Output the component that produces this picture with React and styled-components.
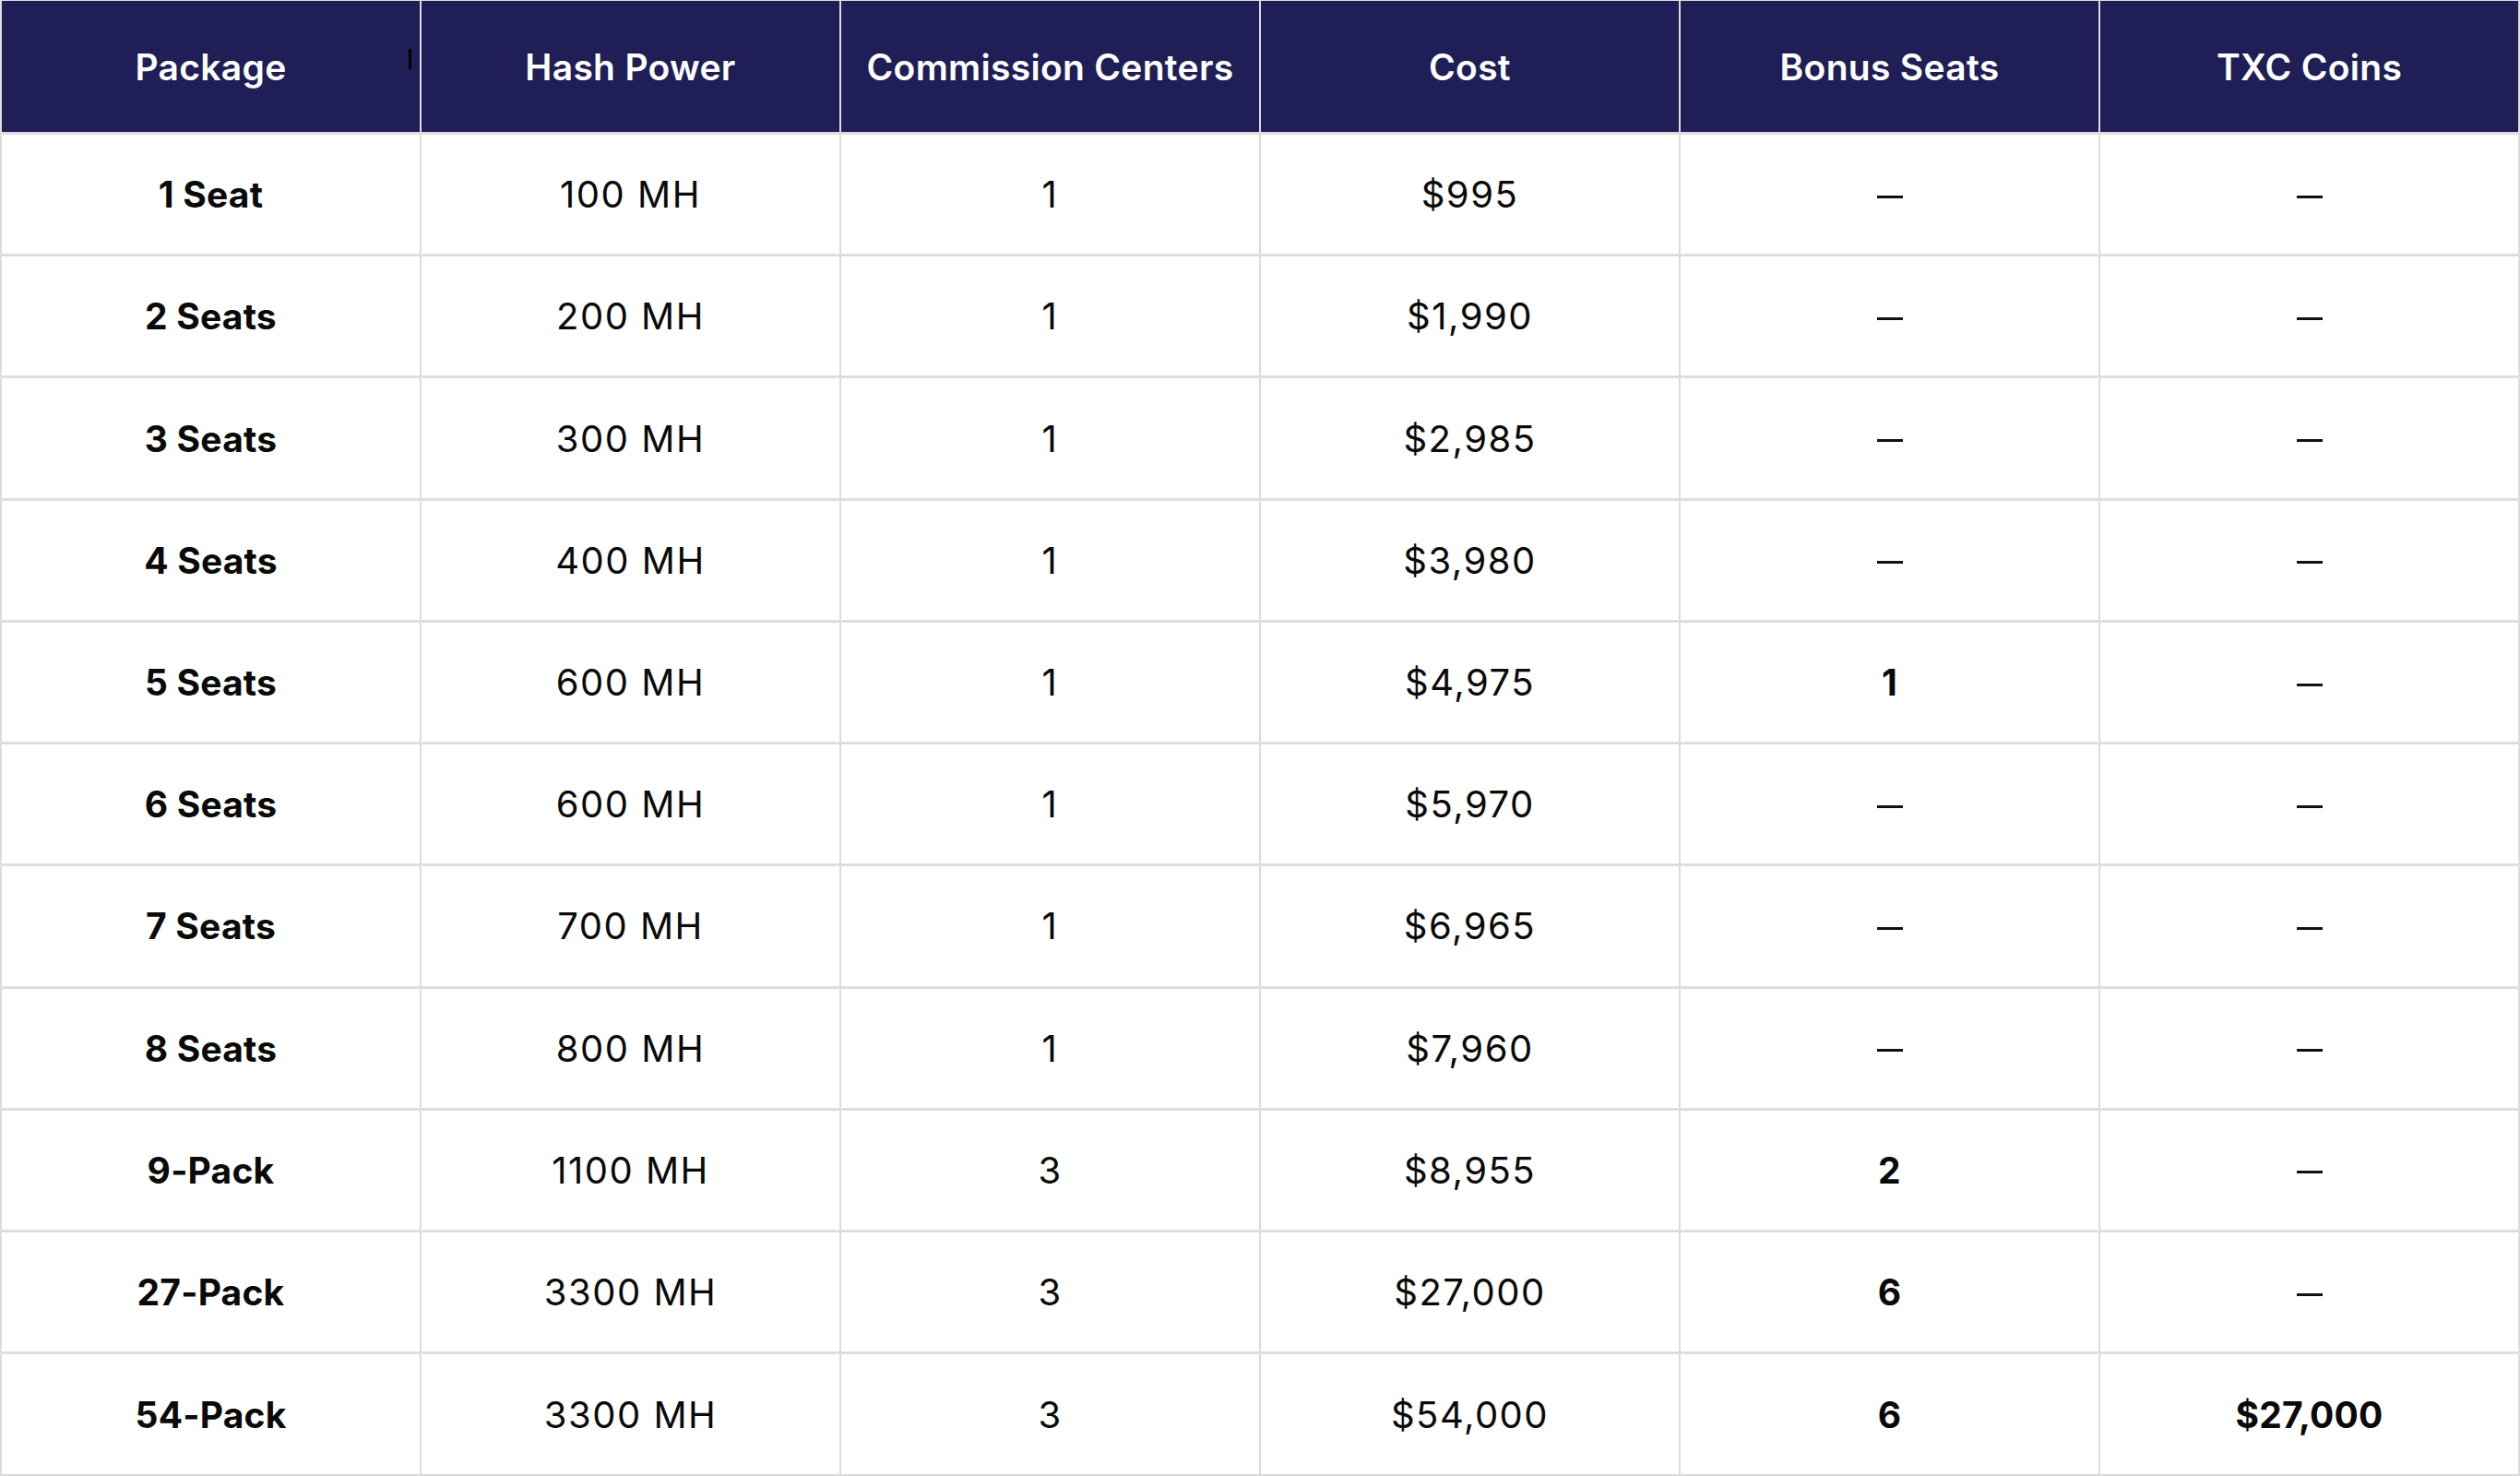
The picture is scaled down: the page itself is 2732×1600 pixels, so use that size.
import React from "react";
import styled, { createGlobalStyle } from "styled-components";

const GlobalStyle = createGlobalStyle`
  html, body {
    margin: 0;
    padding: 0;
    background: #ffffff;
  }
  body {
    font-family: Inter, "Open Sans", "Liberation Sans", sans-serif;
  }
`;

const Page = styled.div`
  width: 100vw;
  height: 100vh;
  overflow: hidden;
`;

const Table = styled.table`
  width: 100%;
  height: 100%;
  table-layout: fixed;
  border-collapse: collapse;
  border: 2px solid #dcdcdc;
  border-top-width: 1px;
`;

const HeadRow = styled.tr`
  height: 144px;
  background: #1f1e57;
`;

const HeadCell = styled.th`
  position: relative;
  color: #ffffff;
  font-size: 39px;
  font-weight: 600;
  letter-spacing: 0.3px;
  text-align: center;
  vertical-align: middle;
  border: 2px solid #dcdcdc;
  border-top-width: 1px;
  border-bottom-color: #c9c9cf;
`;

const Cursor = styled.span`
  position: absolute;
  left: 441px;
  top: 52px;
  width: 3px;
  height: 22px;
  background: #000000;
`;

const Row = styled.tr`
  height: 132px;
`;

const Cell = styled.td`
  color: #0a0a0a;
  font-size: ${(p) => (p.$bold ? "39px" : "40px")};
  font-weight: ${(p) => (p.$bold ? 700 : 400)};
  letter-spacing: ${(p) => (p.$bold ? "0.2px" : "1.5px")};
  text-align: center;
  vertical-align: middle;
  border-left: 2px solid #dcdcdc;
  border-right: 2px solid #dcdcdc;
  border-top: 3px solid #dedede;
`;

const Dash = styled.span`
  display: inline-block;
  width: 28px;
  height: 3px;
  background: #111111;
  vertical-align: middle;
  margin-top: -2px;
`;

const columns = [
  "Package",
  "Hash Power",
  "Commission Centers",
  "Cost",
  "Bonus Seats",
  "TXC Coins",
];

const rows = [
  ["1 Seat", "100 MH", "1", "$995", null, null],
  ["2 Seats", "200 MH", "1", "$1,990", null, null],
  ["3 Seats", "300 MH", "1", "$2,985", null, null],
  ["4 Seats", "400 MH", "1", "$3,980", null, null],
  ["5 Seats", "600 MH", "1", "$4,975", "1", null],
  ["6 Seats", "600 MH", "1", "$5,970", null, null],
  ["7 Seats", "700 MH", "1", "$6,965", null, null],
  ["8 Seats", "800 MH", "1", "$7,960", null, null],
  ["9-Pack", "1100 MH", "3", "$8,955", "2", null],
  ["27-Pack", "3300 MH", "3", "$27,000", "6", null],
  ["54-Pack", "3300 MH", "3", "$54,000", "6", "$27,000"],
];

const App = () => {
  return (
    <Page>
      <GlobalStyle />
      <Table>
        <thead>
          <HeadRow>
            {columns.map((c, i) => (
              <HeadCell key={c}>
                {c}
                {i === 0 && <Cursor />}
              </HeadCell>
            ))}
          </HeadRow>
        </thead>
        <tbody>
          {rows.map((r) => (
            <Row key={r[0]}>
              {r.map((v, i) => {
                const bold = i === 0 || i >= 4;
                return (
                  <Cell key={i} $bold={bold && v !== null}>
                    {v === null ? <Dash aria-label="–" /> : v}
                  </Cell>
                );
              })}
            </Row>
          ))}
        </tbody>
      </Table>
    </Page>
  );
};

export default App;
